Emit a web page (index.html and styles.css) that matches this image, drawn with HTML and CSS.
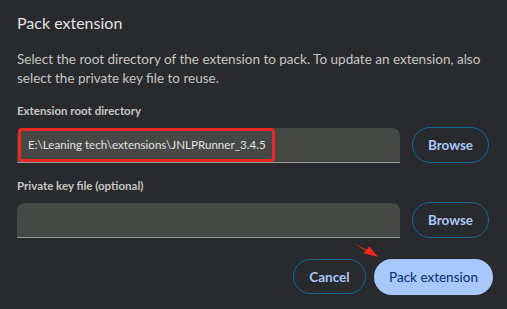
FILE: index.html
```html
<!DOCTYPE html>
<html lang="en">
<head>
  <meta charset="UTF-8" />
  <title>Pack extension</title>
  <link rel="stylesheet" href="styles.css">
</head>
<body>
  <div class="dialog">
    <h1 class="title">Pack extension</h1>
    <p class="desc">Select the root directory of the extension to pack. To update an extension, also select the private key file to reuse.</p>

    <div class="field">
      <div class="label">Extension root directory</div>
      <div class="row">
        <div class="input">
          <span class="value">E:\Leaning tech\extensions\JNLPRunner_3.4.5</span>
        </div>
        <button class="btn outline">Browse</button>
      </div>
    </div>

    <div class="field">
      <div class="label">Private key file (optional)</div>
      <div class="row">
        <div class="input"></div>
        <button class="btn outline">Browse</button>
      </div>
    </div>

    <div class="actions">
      <button class="btn outline">Cancel</button>
      <button class="btn primary">Pack extension</button>
      <svg class="arrow" width="30" height="20" viewBox="0 0 30 20">
        <polygon points="0,0 14,7 16,3 25,14 10,10 13,8" fill="#f2271c" />
      </svg>
    </div>
  </div>
</body>
</html>
```

FILE: styles.css
```css
body {
  margin: 0;
  background-color: #292a2d;
  font-family: Lato, 'Noto Sans', sans-serif;
  color: #e3e3e3;
}

.dialog {
  padding: 12px 14px 0 17px;
}

.title {
  margin: 0;
  font-size: 16px;
  font-weight: 400;
  line-height: 22px;
  color: #e3e3e3;
}

.desc {
  margin: 16px 0 0;
  font-size: 13.5px;
  line-height: 19px;
  color: #c4c7c5;
}

.field {
  margin-top: 15px;
}

.field + .field {
  margin-top: 15px;
}

.label {
  font-size: 11.5px;
  font-weight: 700;
  line-height: 16px;
  color: #c4c7c5;
  margin-bottom: 8px;
}

.row {
  display: flex;
  align-items: center;
  gap: 12px;
}

.input {
  width: 383px;
  height: 35px;
  box-sizing: border-box;
  background-color: #464846;
  border-radius: 8px 8px 0 0;
  border-bottom: 1px solid #9a9a9a;
  display: flex;
  align-items: center;
  padding-left: 1px;
}

.value {
  font-size: 11.6px;
  color: #e3e3e3;
  padding: 5px 6px 6px 7px;
  border: 3px solid #ea2a22;
  border-radius: 4px;
  line-height: 17px;
}

.btn {
  font-family: inherit;
  font-size: 13.5px;
  font-weight: 700;
  height: 36px;
  border-radius: 18px;
  padding: 0 12px;
  white-space: nowrap;
  cursor: pointer;
}

.outline {
  background: transparent;
  border: 1px solid #0e6c9c;
  color: #a8c7fa;
}

.row .outline {
  width: 77px;
}

.actions {
  position: relative;
  display: flex;
  justify-content: flex-end;
  gap: 8px;
  margin-top: 21px;
}

.actions .outline {
  width: 73px;
  height: 35px;
}

.primary {
  width: 119px;
  background-color: #a8c7fa;
  border: none;
  color: #062e6f;
  font-weight: 400;
}

.arrow {
  position: absolute;
  left: 336px;
  top: -16px;
}
```
